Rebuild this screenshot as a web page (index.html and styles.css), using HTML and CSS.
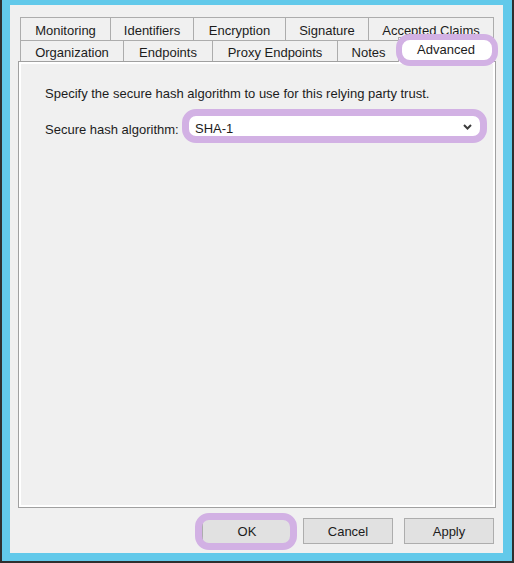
FILE: index.html
```html
<!DOCTYPE html>
<html>
<head>
<meta charset="utf-8">
<link rel="stylesheet" href="styles.css">
</head>
<body>
<div class="win">
  <div class="dlg">
    <div class="tabs">
      <div class="row row1">
        <div class="tab w-mon">Monitoring</div>
        <div class="tab w-ide">Identifiers</div>
        <div class="tab w-enc">Encryption</div>
        <div class="tab w-sig">Signature</div>
        <div class="tab w-acc">Accepted Claims</div>
      </div>
      <div class="row row2">
        <div class="tab w-org">Organization</div>
        <div class="tab w-end">Endpoints</div>
        <div class="tab w-pro">Proxy Endpoints</div>
        <div class="tab w-not">Notes</div>
        <div class="tab tab-sel">Advanced<span class="mark mark-tab"></span></div>
      </div>
    </div>
    <div class="panel">
      <p class="desc">Specify the secure hash algorithm to use for this relying party trust.</p>
      <div class="field">
        <span class="label">Secure hash algorithm:</span>
        <div class="select">
          <span class="value">SHA-1</span>
          <svg class="chev" width="9" height="6" viewBox="0 0 9 6"><path d="M1 1 L4.5 4.5 L8 1" fill="none" stroke="#3c3c3c" stroke-width="2"/></svg>
          <span class="mark mark-sel"></span>
        </div>
      </div>
    </div>
    <div class="buttons">
      <div class="btn btn-ok">OK<span class="mark mark-ok"></span></div>
      <div class="btn">Cancel</div>
      <div class="btn">Apply</div>
    </div>
  </div>
</div>
</body>
</html>
```
FILE: styles.css
```css
html, body {
  margin: 0;
  padding: 0;
}
body {
  background: #2f2f2f;
  width: 514px;
  height: 563px;
  overflow: hidden;
  font-family: "Liberation Sans", Arial, sans-serif;
  font-size: 13px;
  line-height: 15px;
  color: #1c1c1c;
}
.win {
  margin-left: 2px;
  width: 510px;
  height: 561px;
  box-sizing: border-box;
  background: #62c9ea;
  padding: 5px 9px 8px 8px;
}
.dlg {
  width: 493px;
  height: 548px;
  background: #f0f0f0;
  padding-top: 12px;
  box-sizing: border-box;
}
.tabs {
  margin-left: 10px;
  display: flex;
  flex-direction: column;
}
.row {
  display: flex;
  align-items: flex-start;
}
.tab {
  box-sizing: border-box;
  border: 1px solid #acacac;
  border-bottom: none;
  background: #f0f0f0;
  text-align: center;
  white-space: nowrap;
}
.tab + .tab {
  margin-left: -1px;
}
.row1 .tab {
  height: 23px;
  padding-top: 5px;
}
.row2 .tab {
  height: 21px;
  padding-top: 4px;
}
.w-mon { width: 91px; }
.w-ide { width: 84px; }
.w-enc { width: 93px; }
.w-sig { width: 84px; }
.w-acc { width: 126px; }
.w-org { width: 104px; }
.w-end { width: 90px; }
.w-pro { width: 126px; }
.w-not { width: 63px; }
.row2 .tab-sel {
  position: relative;
  z-index: 2;
  width: 96px;
  height: 25px;
  margin-top: -3px;
  margin-left: -2px;
  margin-bottom: -4px;
  padding-top: 4px;
  background: #ffffff;
}
.panel {
  position: relative;
  z-index: 1;
  margin-left: 8px;
  width: 478px;
  height: 447px;
  box-sizing: border-box;
  border: 1px solid #a0a0a0;
  box-shadow: inset 0 0 0 2px #ffffff;
  padding: 24px 0 0 26px;
}
.desc {
  margin: 0;
}
.field {
  display: flex;
  align-items: flex-start;
  margin-top: 13px;
}
.label {
  margin-top: 8px;
  width: 143px;
}
.select {
  position: relative;
  width: 294px;
  height: 24px;
  box-sizing: border-box;
  border: 1px solid #7a7a7a;
  background: #ffffff;
  display: flex;
  align-items: flex-start;
  padding: 6px 9px 0 6px;
}
.chev {
  margin-left: auto;
  margin-top: 3px;
}
.buttons {
  display: flex;
  justify-content: flex-end;
  gap: 11px;
  margin-top: 10px;
  padding-right: 9px;
}
.btn {
  position: relative;
  width: 90px;
  height: 26px;
  box-sizing: border-box;
  border: 1px solid #adadad;
  background: #e1e1e1;
  display: flex;
  align-items: center;
  justify-content: center;
}
.mark {
  position: absolute;
  border: 6px solid #d2b1e4;
  border-radius: 14px;
  pointer-events: none;
}
.mark-tab {
  top: -4px;
  left: -3px;
  right: -5px;
  bottom: -4px;
}
.mark-sel {
  top: -6px;
  left: -7px;
  right: -6px;
  bottom: -6px;
  border-width: 7px;
}
.mark-ok {
  top: -6px;
  left: -8px;
  right: -6px;
  bottom: -7px;
  border-width: 7px;
}
```
